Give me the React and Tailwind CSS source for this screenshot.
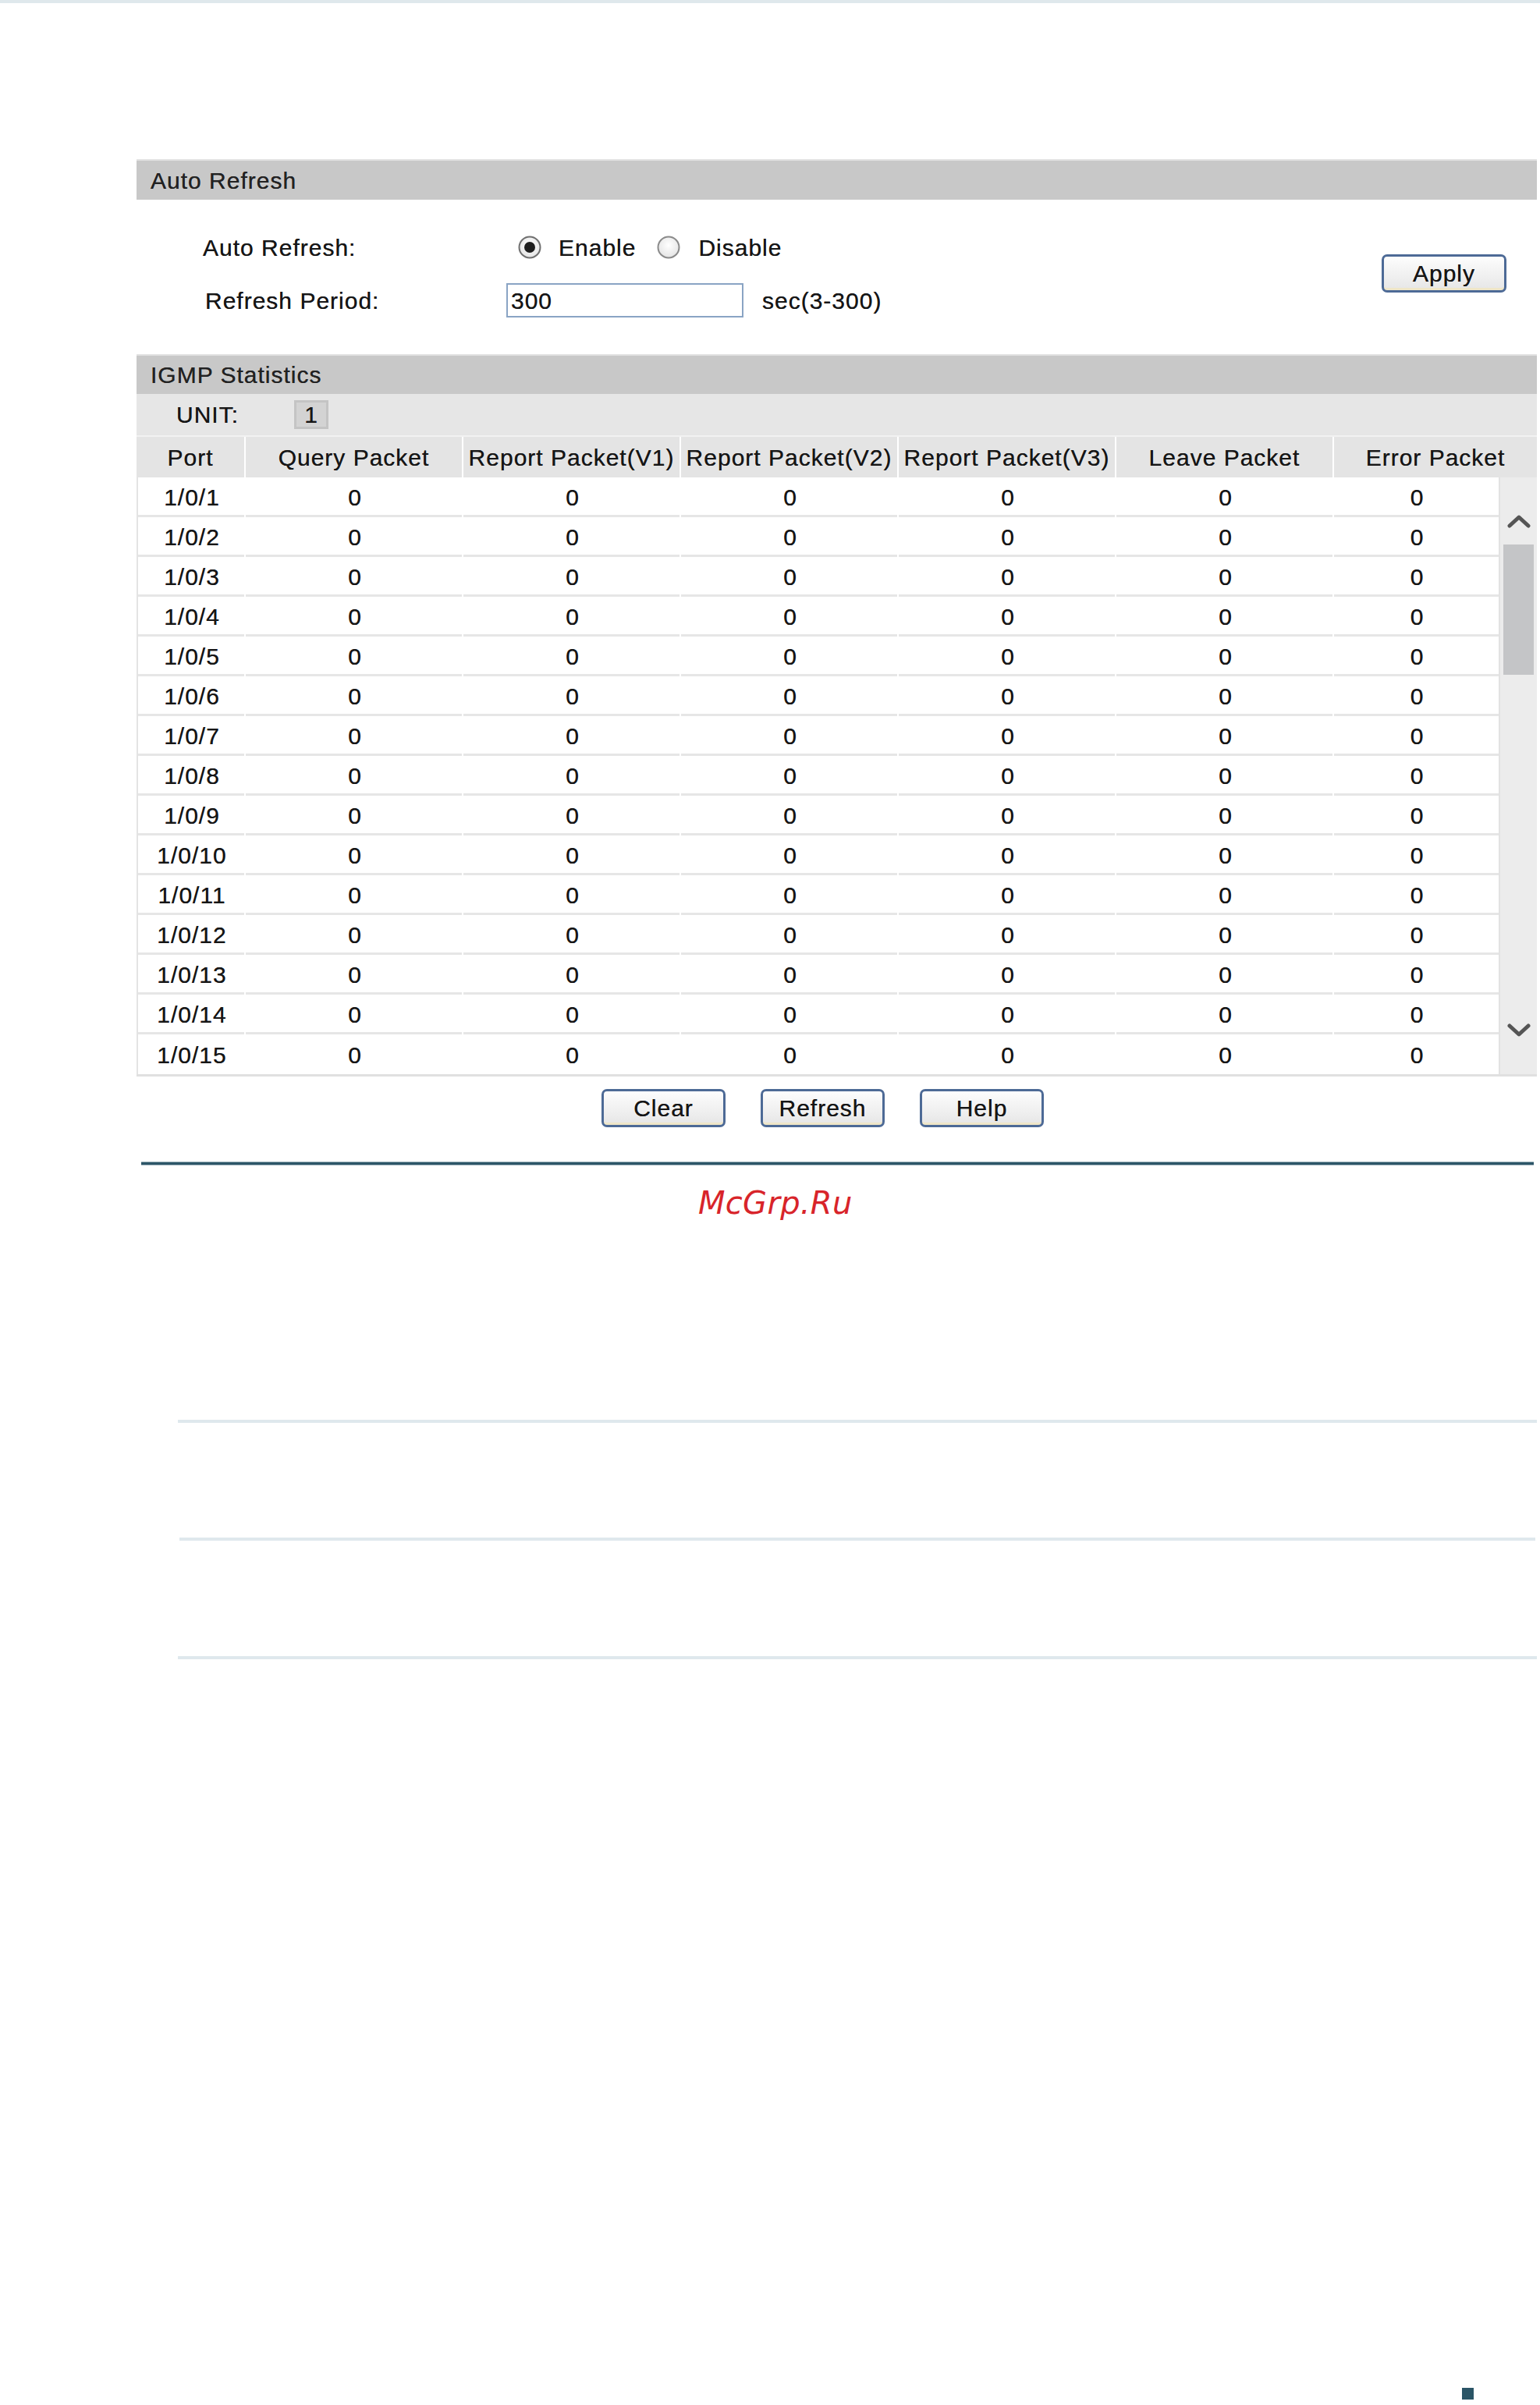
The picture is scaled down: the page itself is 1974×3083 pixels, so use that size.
import React from "react";

const cols = ["Query Packet", "Report Packet(V1)", "Report Packet(V2)", "Report Packet(V3)", "Leave Packet"];

function Radio({ checked }) {
  return (
    <svg width="32" height="32" viewBox="0 0 32 32" className="shrink-0">
      <defs>
        <radialGradient id={checked ? "rg1" : "rg2"} cx="50%" cy="40%" r="60%">
          <stop offset="0%" stopColor="#ffffff" />
          <stop offset="100%" stopColor="#e4e4e4" />
        </radialGradient>
      </defs>
      <circle cx="16" cy="16" r="13.5" fill={`url(#${checked ? "rg1" : "rg2"})`} stroke={checked ? "#6f6f6f" : "#8a8a8a"} strokeWidth="2" />
      {checked && <circle cx="16" cy="16" r="7" fill="#1e1e1e" />}
    </svg>
  );
}

function Btn({ children, w = "w-[159px]" }) {
  return (
    <div
      className={`${w} h-[49px] rounded-[7px] border-[3px] border-[#4d6a96] bg-gradient-to-b from-[#fdfdfd] to-[#e6e6e6] flex items-center justify-center text-[30px] tracking-[1px] text-[#161616] [text-shadow:0_0_0.6px_#222] shadow-[inset_0_-6px_0_-3px_#efe6c8]`}
    >
      {children}
    </div>
  );
}

function Chevron({ up }) {
  return (
    <svg width="30" height="20" viewBox="0 0 30 20" className="block mx-auto">
      <path d={up ? "M3 16 L15 5 L27 16" : "M3 4 L15 15 L27 4"} fill="none" stroke="#555555" strokeWidth="5" strokeLinecap="round" strokeLinejoin="round" />
    </svg>
  );
}

export default function App() {
  const rows = Array.from({ length: 15 }, (_, i) => `1/0/${i + 1}`);
  return (
    <div
      className="w-[1974px] h-[3083px] bg-white overflow-hidden text-[#161616] flex flex-col [text-shadow:0_0_0.5px_#333]"
      style={{ fontFamily: '"Liberation Sans", Arial, sans-serif' }}
    >
      <div className="h-[4px] bg-[#dfe8ec] shrink-0" />

      {/* Auto Refresh section */}
      <div className="ml-[175px] w-[1795px] mt-[200px] shrink-0">
        <div className="h-[52px] bg-[#c8c8c8] border-t-[2px] border-[#e2e2e2] flex items-center pl-[18px] text-[30px] tracking-[1px] text-[#222222]">
          Auto Refresh
        </div>
        <div className="flex items-center pt-[36px] pb-[46px] pr-[39px]">
          <div className="flex flex-col gap-[20px]">
            <div className="h-[50px] flex items-center text-[30px] tracking-[1px]">
              <div className="w-[488px] pl-[85px]">Auto Refresh:</div>
              <Radio checked />
              <span className="ml-[21px]">Enable</span>
              <span className="ml-[26px]"><Radio /></span>
              <span className="ml-[22px]">Disable</span>
            </div>
            <div className="h-[46px] flex items-center text-[30px] tracking-[1px]">
              <div className="w-[474px] pl-[88px]">Refresh Period:</div>
              <div className="w-[304px] h-[44px] border-[2px] border-[#8aa4c4] flex items-center pl-[4px]">300</div>
              <span className="ml-[24px]">sec(3-300)</span>
            </div>
          </div>
          <div className="ml-auto">
            <Btn w="w-[160px]">Apply</Btn>
          </div>
        </div>

        {/* IGMP Statistics */}
        <div className="h-[51px] bg-[#c8c8c8] border-t-[2px] border-[#e2e2e2] flex items-center pl-[18px] text-[30px] tracking-[1px] text-[#222222]">
          IGMP Statistics
        </div>
        <div className="h-[53px] bg-[#e6e6e6] flex items-center text-[30px] tracking-[1px]">
          <div className="w-[202px] pl-[51px]">UNIT:</div>
          <div className="w-[44px] h-[37px] bg-[#d3d3d3] border-[3px] border-[#c4c4c4] flex items-center justify-center text-[30px]">1</div>
        </div>
        <div className="h-[2px] bg-[#f2f2f2]" />
        <div className="h-[52px] flex gap-[2px] bg-white text-[30px] tracking-[1px]">
          <div className="w-[138px] bg-[#e4e4e4] flex items-center justify-center">Port</div>
          {cols.map((c) => (
            <div key={c} className="w-[277px] bg-[#e4e4e4] flex items-center justify-center whitespace-nowrap">{c}</div>
          ))}
          <div className="flex-1 bg-[#e4e4e4] flex items-center justify-center">Error Packet</div>
        </div>

        <div className="flex border-b-[3px] border-[#e0e0e0]">
          <div className="w-[1746px] border-l-[2px] border-[#e4e4e4]">
            {rows.map((p, i) => (
              <div key={p} className="h-[51px] flex gap-[2px] text-[30px] tracking-[1px] pt-[2px]">
                <div className={`w-[136px] pl-[2px] flex items-center justify-center ${i < 14 ? "border-b-[3px] border-[#e6e6e6]" : ""}`}>{p}</div>
                {cols.map((c) => (
                  <div key={c} className={`w-[277px] pl-[3px] flex items-center justify-center ${i < 14 ? "border-b-[3px] border-[#e6e6e6]" : ""}`}>0</div>
                ))}
                <div className={`flex-1 pl-[2px] flex items-center justify-center ${i < 14 ? "border-b-[3px] border-[#e6e6e6]" : ""}`}>0</div>
              </div>
            ))}
          </div>
          <div className="flex-1 bg-[#ececec] border-l-[2px] border-[#e2e2e2] flex flex-col">
            <div className="mt-[46px]"><Chevron up /></div>
            <div className="mt-[20px] h-[167px] mx-[4px] bg-[#c4c5c7]" />
            <div className="flex-1" />
            <div className="mb-[46px]"><Chevron /></div>
          </div>
        </div>

        <div className="flex gap-[45px] ml-[596px] mt-[16px]">
          <Btn>Clear</Btn>
          <Btn>Refresh</Btn>
          <Btn>Help</Btn>
        </div>
      </div>

      <div className="ml-[181px] w-[1785px] h-[5px] mt-[44px] bg-[#2d5668] border-y border-[#9fb3bc] shrink-0" />

      <div
        className="ml-[895px] mt-[28px] text-[40px] leading-none italic text-[#d8242a] tracking-[0.3px] shrink-0 [text-shadow:none]"
        style={{ fontFamily: '"DejaVu Sans", sans-serif' }}
      >
        McGrp.Ru
      </div>

      <div className="ml-[228px] w-[1742px] h-[4px] mt-[258px] bg-[#dfe8ed] shrink-0" />
      <div className="ml-[230px] w-[1738px] h-[4px] mt-[147px] bg-[#dfe8ed] shrink-0" />
      <div className="ml-[228px] w-[1742px] h-[4px] mt-[148px] bg-[#dfe8ed] shrink-0" />

      <div className="ml-[1874px] w-[15px] h-[15px] mt-[934px] bg-[#2b5566] shrink-0" />
    </div>
  );
}
